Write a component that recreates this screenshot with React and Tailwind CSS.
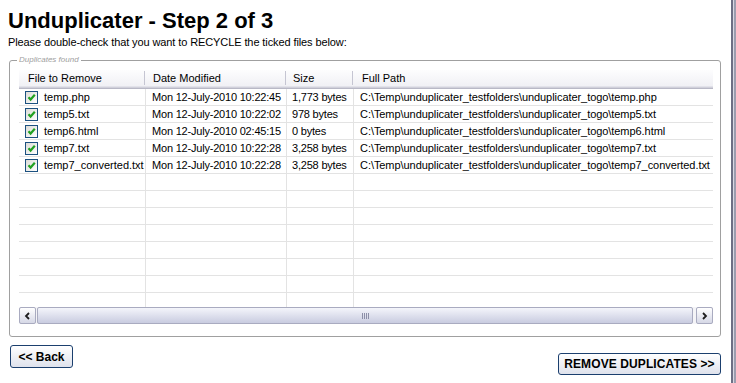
const FILES = [
  { name: 'temp.php', date: 'Mon 12-July-2010 10:22:45', size: '1,773 bytes' },
  { name: 'temp5.txt', date: 'Mon 12-July-2010 10:22:02', size: '978 bytes' },
  { name: 'temp6.html', date: 'Mon 12-July-2010 02:45:15', size: '0 bytes' },
  { name: 'temp7.txt', date: 'Mon 12-July-2010 10:22:28', size: '3,258 bytes' },
  { name: 'temp7_converted.txt', date: 'Mon 12-July-2010 10:22:28', size: '3,258 bytes' },
];

const BASE = 'C:\\Temp\\unduplicater_testfolders\\unduplicater_togo\\';
const EMPTY_ROWS = 8;

function Checkbox() {
  return (
    <span className="w-[13px] h-[13px] border border-[#1c5180] bg-gradient-to-br from-[#dcdcd7] to-white flex items-center justify-center flex-shrink-0">
      <svg width="9" height="9" viewBox="0 0 9 9">
        <path d="M1.5 4.2 L3.6 6.5 L7.8 1.8" fill="none" stroke="#21a121" strokeWidth="2.2" />
      </svg>
    </span>
  );
}

function HeaderCell({ label, className }) {
  return (
    <div className={`flex items-center h-full ${className}`}>
      <span className="pl-[9px] flex-1">{label}</span>
      <span className="w-px h-[14px] bg-[#c5c5d2] mr-[1px]" />
    </div>
  );
}

function ScrollButton({ dir }) {
  return (
    <div className="w-[17px] h-[17px] rounded-[2px] border border-[#a9abc0] bg-gradient-to-b from-white to-[#d6d8e6] flex items-center justify-center flex-shrink-0">
      <svg width="7" height="8" viewBox="0 0 7 8">
        <path d={dir === 'left' ? 'M5 1 L2 4 L5 7' : 'M2 1 L5 4 L2 7'} fill="none" stroke="#1e1e1e" strokeWidth="1.8" />
      </svg>
    </div>
  );
}

function Row({ file }) {
  return (
    <div className="flex h-[17px] border-b border-[#e3e3e3] flex-shrink-0 whitespace-nowrap">
      <div className="w-[127px] border-r border-[#e3e3e3] flex items-center gap-[6px] pl-[6px] overflow-hidden">
        {file && <Checkbox />}
        {file && <span className="pt-[1px]">{file.name}</span>}
      </div>
      <div className="w-[141px] border-r border-[#e3e3e3] pl-[6px] pt-[1px] overflow-hidden tracking-[-0.2px]">{file?.date}</div>
      <div className="w-[67px] border-r border-[#e3e3e3] pl-[5px] pt-[1px] overflow-hidden tracking-[-0.2px]">{file?.size}</div>
      <div className="flex-1 pl-[6px] pt-[1px] overflow-hidden tracking-[-0.06px]">{file && BASE + file.name}</div>
    </div>
  );
}

export default function App() {
  return (
    <div className="flex w-[736px] h-[383px] bg-white overflow-hidden text-black font-['Liberation_Sans',Arial,sans-serif]">
      <div className="flex-1 flex flex-col pl-[8px]">
        {/* Title */}
        <h1 className="mt-[8px] text-[22px] leading-[25px] font-bold">Unduplicater - Step 2 of 3</h1>
        <p className="mt-[2px] text-[11px] leading-[14px] tracking-[-0.1px]">Please double-check that you want to RECYCLE the ticked files below:</p>

        {/* Group box */}
        <div className="relative mt-[11px] ml-[1px] w-[712px] h-[277px] border border-[#a0a0a0] rounded-[3px] pt-[9px] pl-[9px] pb-[12px] pr-[7px] flex flex-col">
          <span className="absolute -top-[6px] left-[7px] px-[2px] bg-white text-[8px] leading-[10px] italic text-[#a0a0a0]">Duplicates found</span>

          {/* List header */}
          <div className="flex h-[19px] pb-[3px] text-[11px] bg-gradient-to-b from-[#fdfdfe] to-[#eeeef3] shadow-[inset_0_-1px_0_#b8b8c6,inset_0_-2px_0_#d0d0da,inset_0_-3px_0_#e2e2ea] flex-shrink-0">
            <HeaderCell label="File to Remove" className="w-[127px]" />
            <HeaderCell label="Date Modified" className="w-[141px] [&>span:first-child]:pl-[7px]" />
            <HeaderCell label="Size" className="w-[67px] [&>span:first-child]:pl-[6px]" />
            <div className="flex-1 flex items-center pl-[8px]">Full Path</div>
          </div>

          {/* Rows */}
          <div className="flex-1 flex flex-col overflow-hidden text-[11px] leading-[15px]">
            {FILES.map((f) => (
              <Row key={f.name} file={f} />
            ))}
            {Array.from({ length: EMPTY_ROWS }).map((_, i) => (
              <Row key={i} />
            ))}
          </div>

          {/* Horizontal scrollbar */}
          <div className="flex items-center h-[17px] flex-shrink-0 bg-[#f4f4f7]">
            <ScrollButton dir="left" />
            <div className="ml-[1px] mr-[3px] flex-1 h-[17px] rounded-[2px] border border-[#a9abc0] bg-gradient-to-b from-[#f4f5fb] to-[#c9cce0] flex items-center justify-center">
              <div className="flex gap-[1px]">
                <span className="w-px h-[6px] bg-[#8c8fa8]" />
                <span className="w-px h-[6px] bg-[#8c8fa8]" />
                <span className="w-px h-[6px] bg-[#8c8fa8]" />
                <span className="w-px h-[6px] bg-[#8c8fa8]" />
              </div>
            </div>
            <ScrollButton dir="right" />
          </div>
        </div>

        {/* Buttons */}
        <div className="flex items-start justify-between w-[713px]">
          <button className="mt-[8px] ml-[2px] w-[63px] h-[23px] rounded-[3px] border border-[#1b3f6e] bg-gradient-to-b from-white to-[#dfe2ec] text-[12px] font-bold">
            &lt;&lt; Back
          </button>
          <button className="mt-[16px] w-[163px] h-[22px] rounded-[3px] border border-[#1b3f6e] bg-gradient-to-b from-white to-[#dfe2ec] text-[12px] font-bold tracking-[0.1px]">
            REMOVE DUPLICATES &gt;&gt;
          </button>
        </div>
      </div>

      {/* Window frame edge */}
      <div className="w-[5px] h-full flex">
        <div className="w-[2px] bg-[#6e6e84]" />
        <div className="w-[1px] bg-[#d8d8e2]" />
        <div className="w-[2px] bg-[#9c9cae]" />
      </div>
    </div>
  );
}
